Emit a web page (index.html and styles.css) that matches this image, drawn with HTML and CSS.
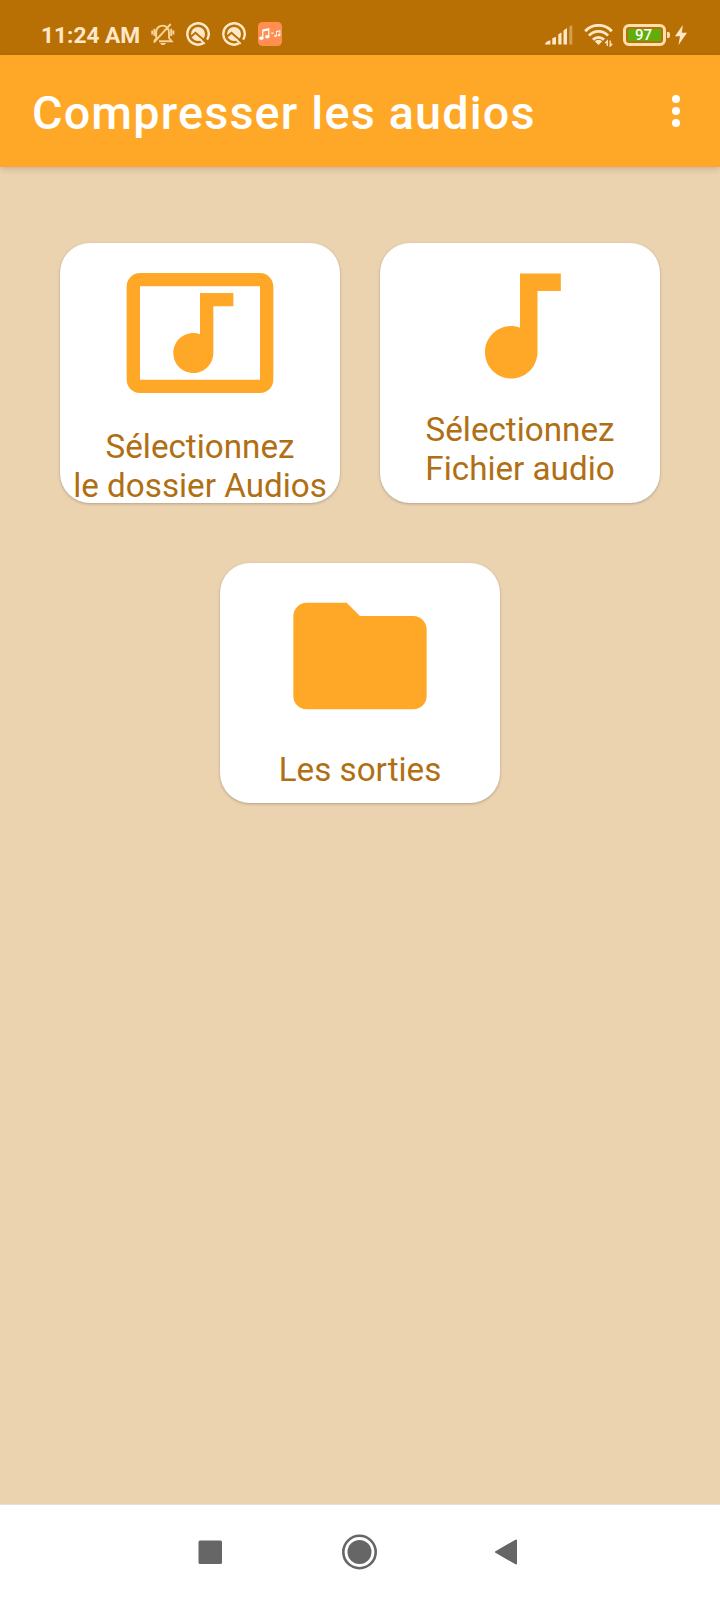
FILE: index.html
```html
<!DOCTYPE html>
<html lang="fr">
<head>
<meta charset="utf-8">
<title>Compresser les audios</title>
<link rel="stylesheet" href="styles.css">
</head>
<body>
<div class="screen">
  <div class="status">
    <span class="time">11:24 AM</span>
    <svg class="bell" width="24" height="24" viewBox="0 0 24 24" fill="none" stroke="currentColor" stroke-width="1.900">
      <path d="M5.200 16.500V10a6.300 6.300 0 0 1 12.800 0v6l2.700 3.200H8M5 17l-2 2.200M2.800 20.600 19.700 2M1.200 8.500v4M3.400 6.700v7.300M20.200 6.700v7.300M22.400 8.500v4"/>
      <path d="M9 21h6l-1.600 2h-2.800z" fill="currentColor" stroke="none"/>
    </svg>
    <svg class="ring" width="24" height="24" viewBox="0 0 24 24" fill="none">
      <path d="M17 21.400A10.700 10.700 0 1 1 21.100 17.600" stroke="currentColor" stroke-width="2.400"/>
      <circle cx="12" cy="12" r="7" fill="currentColor"/>
      <path d="M5 14.500 9.500 10.700 18.300 18.500" stroke="#b87004" stroke-width="2"/>
      <path d="M13.500 17 18.800 21.800" stroke="currentColor" stroke-width="1.800"/>
    </svg>
    <svg class="ring" width="24" height="24" viewBox="0 0 24 24" fill="none">
      <path d="M17 21.400A10.700 10.700 0 1 1 21.100 17.600" stroke="currentColor" stroke-width="2.400"/>
      <circle cx="12" cy="12" r="7" fill="currentColor"/>
      <path d="M5 14.500 9.500 10.700 18.300 18.500" stroke="#b87004" stroke-width="2"/>
      <path d="M13.500 17 18.800 21.800" stroke="currentColor" stroke-width="1.800"/>
    </svg>
    <svg class="app-badge" width="24" height="24" viewBox="0 0 24 24">
      <rect width="24" height="24" rx="4.500" fill="#ff8e50"/>
      <g fill="#fff"><ellipse cx="3.300" cy="16.300" rx="2.200" ry="1.700"/><ellipse cx="9.200" cy="14.800" rx="2.200" ry="1.700"/><path d="M4.200 7.500 11.400 6v2.300L5.400 9.600v6.700H4.200zM10.200 7h1.200v8h-1.200zM13.300 10.500h2.200v1.200h-2.200z"/><ellipse cx="17.500" cy="14" rx="1.300" ry="1.100"/><ellipse cx="21" cy="13.200" rx="1.300" ry="1.100"/><path d="M18 9l4.300-.8v5h-.8V9.600l-2.700.5V14H18z"/></g>
    </svg>
    <svg class="signal" width="28" height="20" viewBox="0 0 28 20" fill="currentColor">
      <path d="M0 19.500q0-3 5.400-4.300v4.300zM7.300 13.200l3.700-1.500v7.800H7.300zM13.300 9.300 16.500 7.500v12h-3.200zM18.500 5.500 22 3v16.500h-3.500z"/>
      <path d="M24.300 1.500 27.300 0v19.500h-3z" opacity=".4"/>
    </svg>
    <svg class="wifi" width="30" height="23" viewBox="0 0 30 23">
      <g fill="none" stroke="currentColor" stroke-width="2.900"><path d="M1.200 7.200a18 18 0 0 1 26.600 0M5 11.600a12.800 12.800 0 0 1 19 0M9 15.700a7.600 7.600 0 0 1 11 0"/></g>
      <path d="M10.800 17.200a5.200 5.200 0 0 1 7.400 0L14.500 21z" fill="currentColor"/>
      <path d="M23.300 22v-5l-2 2.300M26.200 16.500v5.500l2-2.300" fill="none" stroke="currentColor" stroke-width="1.300"/>
    </svg>
    <div class="battery"><span class="level">97</span></div>
    <svg class="bolt" width="12" height="20" viewBox="0 0 12 20" fill="currentColor"><path d="M7.800 0 0 11.300h5L3.500 20 12 7.700H6.800z"/></svg>
  </div>

  <header class="appbar">
    <h1 class="title">Compresser les audios</h1>
    <svg class="more" width="8" height="34" viewBox="0 0 8 34" fill="#fff"><circle cx="4" cy="5" r="4"/><circle cx="4" cy="17" r="4"/><circle cx="4" cy="29" r="4"/></svg>
  </header>

  <main class="content">
    <div class="row">
      <div class="card card-folder">
        <svg width="160" height="160" viewBox="0 0 24 24" fill="currentColor"><path d="M21 3H3c-1.100 0-2 .9-2 2v14c0 1.100.9 2 2 2h18c1.100 0 2-.9 2-2V5c0-1.100-.9-2-2-2zm0 16H3V5h18v14zM8 15c0-1.660 1.340-3 3-3 .35 0 .69.070 1 .18V6h5v2h-3v7.030c-.02 1.640-1.350 2.970-3 2.970-1.660 0-3-1.340-3-3z"/></svg>
        <div class="label">Sélectionnez<br>le dossier Audios</div>
      </div>
      <div class="card">
        <svg width="140" height="140" viewBox="0 0 24 24" fill="currentColor"><path d="M12 3v9.280c-.47-.17-.97-.28-1.500-.28C8.010 12 6 14.010 6 16.500S8.010 21 10.500 21c2.310 0 4.200-1.750 4.450-4H15V6h4V3h-7z"/></svg>
        <div class="label">Sélectionnez<br>Fichier audio</div>
      </div>
    </div>
    <div class="card card-output">
      <svg width="160" height="160" viewBox="0 0 24 24" fill="currentColor"><path d="M10 4H4c-1.100 0-1.990.9-1.990 2L2 18c0 1.100.9 2 2 2h16c1.100 0 2-.9 2-2V8c0-1.100-.9-2-2-2h-8l-2-2z"/></svg>
      <div class="label">Les sorties</div>
    </div>
  </main>

  <nav class="nav">
    <svg width="24" height="24" viewBox="0 0 24 24"><rect x=".5" y=".5" width="23.500" height="23.500" rx="1.500" fill="currentColor"/></svg>
    <svg width="36" height="36" viewBox="0 0 36 36"><circle cx="17.500" cy="18" r="16.200" fill="none" stroke="currentColor" stroke-width="2.600"/><circle cx="17.500" cy="18" r="12" fill="currentColor"/></svg>
    <svg width="24" height="28" viewBox="0 0 24 28"><path d="M2 14 22 2.500v23z" fill="currentColor" stroke="currentColor" stroke-width="2" stroke-linejoin="round"/></svg>
  </nav>
</div>
</body>
</html>
```

FILE: styles.css
```css
* { box-sizing: border-box; }
body { margin: 0; font-family: Roboto, sans-serif; }
svg { display: block; flex: none; }
.screen { width: 720px; height: 1600px; display: flex; flex-direction: column; background: #ebd3b0; }

.status { height: 55px; flex: none; display: flex; align-items: flex-start; padding: 22px 33px 0 41px; background: #b87004; color: #ffe8c8; }
.time { width: 99px; margin-top: 1px; font-size: 22.700px; line-height: 26px; font-weight: 700; white-space: nowrap; }
.bell { margin-left: 11px; color: #f7d39b; }
.ring { margin-left: 12px; }
.bell + .ring { margin-left: 11px; }
.app-badge { margin-left: 12px; }
.signal { margin: 3px 0 0 auto; }
.wifi { margin: 2px 0 0 11px; }
.battery { position: relative; width: 43px; height: 22px; margin: 2px 0 0 9px; padding: 2px; border: 3px solid #ffdfb0; border-radius: 6px; }
.battery::after { content: ""; position: absolute; right: -7px; top: 5px; width: 3px; height: 6px; background: #ffdfb0; border-radius: 0 2px 2px 0; }
.level { display: block; height: 12px; padding-right: 2px; background: #5fae0a; color: #fff; font-size: 15px; line-height: 13px; font-weight: 500; text-align: center; }
.bolt { margin: 3px 0 0 9px; }

.appbar { height: 112px; flex: none; display: flex; align-items: center; justify-content: space-between; padding: 0 40px 0 32px; background: #ffa726; box-shadow: 0 2px 6px rgba(0, 0, 0, .16); }
.title { margin: 4px 0 0; color: #fff; font-size: 46.700px; line-height: 54px; font-weight: 500; letter-spacing: 1.200px; white-space: nowrap; }

.content { flex: 1; display: flex; flex-direction: column; align-items: center; gap: 60px; padding-top: 76px; }
.row { display: flex; gap: 40px; }
.card { width: 280px; height: 260px; padding-top: 13px; display: flex; flex-direction: column; align-items: center; gap: 14px; background: #fff; border-radius: 30px; color: #ffa726; box-shadow: 0 1px 3px rgba(0, 0, 0, .24); }
.card-folder { padding-top: 10px; }
.card-output { height: 240px; }
.label { color: #b06f14; font-size: 33.200px; line-height: 39px; text-align: center; white-space: nowrap; }

.nav { height: 96px; flex: none; display: flex; align-items: center; padding: 0 0 1px 198px; background: #fff; border-top: 1px solid #e2dfdc; color: #666; }
.nav svg + svg { margin-left: 120px; }
.nav svg:last-child { margin-left: 116px; }
```
